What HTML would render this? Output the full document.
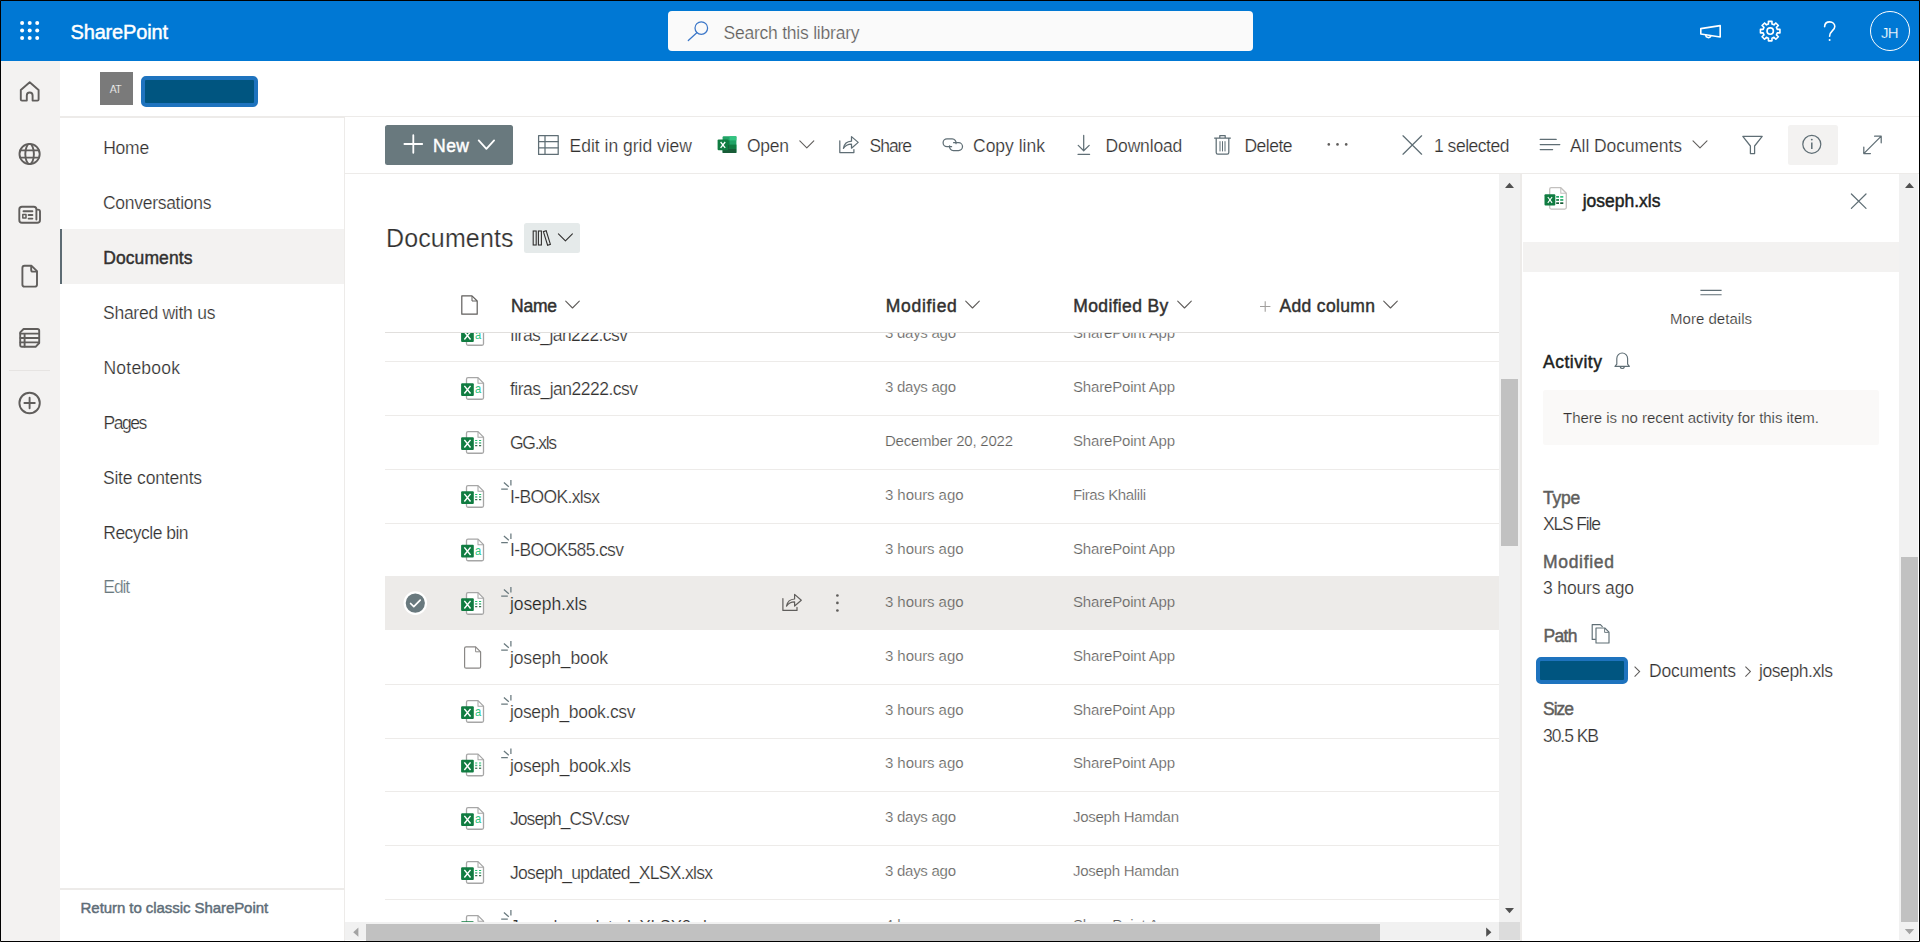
<!DOCTYPE html>
<html lang="en"><head><meta charset="utf-8"><title>Documents - All Documents</title>
<style>
html,body{margin:0;padding:0;background:#fff;}
body{width:1920px;height:942px;overflow:hidden;font-family:'Liberation Sans',sans-serif;}
#frame{position:relative;width:1920px;height:942px;overflow:hidden;background:#fff;}
#frame div,#frame span,#frame svg,#frame h1,#frame h2,#frame h3,.g{position:absolute;margin:0;padding:0;}
.g{left:0;top:0;width:0;height:0;}
.t{white-space:pre;line-height:1;font-weight:400;}
#list{left:0;top:0;width:1920px;height:942px;clip-path:inset(333px 421px 20px 345px);}
.sep{left:385px;width:1114px;height:1px;background:#edebe9;}
svg{overflow:visible;}
</style></head>
<body>
<div id="frame">
<header id="suitebar" class="g">
<div id="suitebg" style="left:0;top:0;width:1920px;height:61px;background:#0078d4;"></div>
<div id="search" style="left:668px;top:11px;width:585px;height:40px;background:#fafafa;border-radius:4px;"></div>
<div id="avatar" style="left:1870px;top:11px;width:38px;height:38px;border:1px solid #fff;border-radius:50%;"></div>
<svg style="left:0;top:0" width="1920" height="942" viewBox="0 0 1920 942" aria-hidden="true">
<circle cx="22.1" cy="22.9" r="2" fill="#fff"/>
<circle cx="29.7" cy="22.9" r="2" fill="#fff"/>
<circle cx="37.2" cy="22.9" r="2" fill="#fff"/>
<circle cx="22.1" cy="30.4" r="2" fill="#fff"/>
<circle cx="29.7" cy="30.4" r="2" fill="#fff"/>
<circle cx="37.2" cy="30.4" r="2" fill="#fff"/>
<circle cx="22.1" cy="38" r="2" fill="#fff"/>
<circle cx="29.7" cy="38" r="2" fill="#fff"/>
<circle cx="37.2" cy="38" r="2" fill="#fff"/>
<g fill="none" stroke="#3a76c8" stroke-width="1.25" stroke-linecap="round"><circle cx="701.3" cy="28.1" r="6.3"/><path d="M696.8,32.7 L688.3,40.5"/></g>
<g fill="none" stroke="#ffffff" stroke-linecap="round" stroke-linejoin="round" stroke-width="1.6"><path d="M1700.8,28.6 L1720.2,25.6 L1720.2,37 L1700.8,34 Z"/><path d="M1705.8,34.9 A2.6,2.6 0 0 0 1710.9,35.7"/></g>
<g fill="none" stroke="#ffffff" stroke-linecap="round" stroke-linejoin="round" stroke-width="1.6"><path d="M1768.42,21.36 L1771.98,21.36 L1771.96,24.02 L1773.97,24.85 L1775.83,22.96 L1778.34,25.47 L1776.45,27.33 L1777.28,29.34 L1779.94,29.32 L1779.94,32.88 L1777.28,32.86 L1776.45,34.87 L1778.34,36.73 L1775.83,39.24 L1773.97,37.35 L1771.96,38.18 L1771.98,40.84 L1768.42,40.84 L1768.44,38.18 L1766.43,37.35 L1764.57,39.24 L1762.06,36.73 L1763.95,34.87 L1763.12,32.86 L1760.46,32.88 L1760.46,29.32 L1763.12,29.34 L1763.95,27.33 L1762.06,25.47 L1764.57,22.96 L1766.43,24.85 L1768.44,24.02 Z"/><circle cx="1770.2" cy="31.1" r="3.2"/></g>
<g fill="none" stroke="#ffffff" stroke-linecap="round" stroke-linejoin="round" stroke-width="1.6"><path d="M1824.6,26.6 C1824.8,23.6 1827,21.9 1829.7,21.9 C1832.7,21.9 1834.8,23.9 1834.8,26.5 C1834.8,30.6 1829.6,30.8 1829.6,36.2"/></g><circle cx="1829.6" cy="40" r="1" fill="#fff"/>
</svg>
<span class="t" style="left:70.5px;top:22px;font-size:20px;color:#ffffff;letter-spacing:-0.163px;-webkit-text-stroke:0.45px #ffffff;">SharePoint</span>
<span class="t" style="left:723.5px;top:25px;font-size:17.5px;color:#605e5c;letter-spacing:-0.226px;-webkit-text-stroke:0.22px #fafafa;">Search this library</span>
<span class="t" style="left:1881.0px;top:25px;font-size:15px;color:#ffffff;letter-spacing:-0.844px;-webkit-text-stroke:0.22px #0078d4;">JH</span>
</header>
<nav id="apprail" class="g" aria-label="Apps">
<div id="rail" style="left:0;top:61px;width:60px;height:881px;background:#f3f2f1;"></div>
<div style="left:9px;top:370px;width:41px;height:1px;background:#e6e4e2;"></div>
<svg style="left:0;top:0" width="1920" height="942" viewBox="0 0 1920 942" aria-hidden="true">
<g fill="none" stroke="#605e5c" stroke-width="1.9" stroke-linecap="round" stroke-linejoin="round"><path d="M20.8,90 L29.7,82.3 L38.6,90 L38.6,99.4 Q38.6,100.6 37.4,100.6 L32.6,100.6 L32.6,95.4 A2.9,2.9 0 0 0 26.8,95.4 L26.8,100.6 L22,100.6 Q20.8,100.6 20.8,99.4 Z"/></g>
<g fill="none" stroke="#605e5c" stroke-width="1.9" stroke-linecap="round" stroke-linejoin="round" stroke-width="1.8"><circle cx="29.6" cy="154" r="10.1"/><ellipse cx="29.6" cy="154" rx="4.3" ry="10.1"/><path d="M20.3,150.4 L38.9,150.4 M20.3,157.6 L38.9,157.6"/></g>
<g fill="none" stroke="#605e5c" stroke-width="1.9" stroke-linecap="round" stroke-linejoin="round" stroke-width="1.8"><path d="M36.4,209.6 L38,209.6 Q40,209.6 40,211.6 L40,220 Q40,222.8 37.2,222.8 L22,222.8 Q19.3,222.8 19.3,220 L19.3,209.4 Q19.3,206.8 22,206.8 L33.8,206.8 Q36.4,206.8 36.4,209.4 L36.4,219.6"/><path d="M23.5,211.2 L32.4,211.2 M28.6,215 L32.4,215 M28.6,218.6 L32.4,218.6"/><rect x="22.8" y="214.4" width="3.2" height="3.6" stroke-width="1.5"/></g>
<g fill="none" stroke="#605e5c" stroke-width="1.9" stroke-linecap="round" stroke-linejoin="round" stroke-width="1.8"><path d="M24.6,265.8 L31.6,265.8 L37,271.2 L37,284.4 Q37,286.6 34.8,286.6 L24.6,286.6 Q22.4,286.6 22.4,284.4 L22.4,268 Q22.4,265.8 24.6,265.8 Z"/><path d="M31.2,266.2 L31.2,270 Q31.2,271.6 32.8,271.6 L36.6,271.6"/></g>
<g fill="none" stroke="#605e5c" stroke-width="1.9" stroke-linecap="round" stroke-linejoin="round" stroke-width="1.7"><path d="M23.6,329 L37.4,329 Q39.2,329 39.2,330.8 L39.2,343 L35.6,346.8 L22,346.8 Q20.2,346.8 20.2,345 L20.2,332.4 Z"/><path d="M20.4,333.6 L39,333.6 M20.4,338 L39,338 M20.4,342.4 L39,342.4 M24.6,333.8 L24.6,346.6"/></g>
<g fill="none" stroke="#605e5c" stroke-width="1.9" stroke-linecap="round" stroke-linejoin="round" stroke-width="1.7"><circle cx="29.6" cy="403" r="10.2"/><path d="M24.4,403 L34.8,403 M29.6,397.8 L29.6,408.2"/></g>
</svg>
</nav>
<div id="siteheader" class="g">
<div id="sitelogo" style="left:100px;top:72px;width:33px;height:33px;background:#7a7a7a;"></div>
<div id="redact1" style="left:141px;top:76px;width:109px;height:23px;background:#005580;border:4px solid #1e73be;border-radius:5px;"></div>
<div style="left:60px;top:116px;width:285px;height:2px;background:#edebe9;"></div>
<div style="left:345px;top:116px;width:1575px;height:1px;background:#edebe9;"></div>
<span class="t" style="left:109.8px;top:84px;font-size:10.5px;color:#ffffff;letter-spacing:-0.841px;-webkit-text-stroke:0.22px #7a7a7a;">AT</span>
</div>
<nav id="sitenav" class="g" aria-label="Site">
<div id="navsel" style="left:60px;top:229px;width:284px;height:55px;background:#f3f2f1;"></div>
<div style="left:60px;top:229px;width:2px;height:55px;background:#5c6b73;"></div>
<div style="left:344px;top:118px;width:1px;height:824px;background:#edebe9;"></div>
<div style="left:60px;top:888px;width:284px;height:2px;background:#edebe9;"></div>
<span class="t" style="left:103.2px;top:140px;font-size:17.5px;color:#323130;letter-spacing:-0.229px;-webkit-text-stroke:0.22px #ffffff;">Home</span>
<span class="t" style="left:103.0px;top:195px;font-size:17.5px;color:#323130;letter-spacing:-0.290px;-webkit-text-stroke:0.22px #ffffff;">Conversations</span>
<span class="t" style="left:103.2px;top:250px;font-size:17.5px;color:#323130;letter-spacing:0.098px;-webkit-text-stroke:0.45px #323130;">Documents</span>
<span class="t" style="left:103.0px;top:305px;font-size:17.5px;color:#323130;letter-spacing:-0.259px;-webkit-text-stroke:0.22px #ffffff;">Shared with us</span>
<span class="t" style="left:103.5px;top:360px;font-size:17.5px;color:#323130;letter-spacing:0.225px;-webkit-text-stroke:0.22px #ffffff;">Notebook</span>
<span class="t" style="left:103.6px;top:415px;font-size:17.5px;color:#323130;letter-spacing:-1.481px;-webkit-text-stroke:0.22px #ffffff;">Pages</span>
<span class="t" style="left:102.9px;top:470px;font-size:17.5px;color:#323130;letter-spacing:-0.164px;-webkit-text-stroke:0.22px #ffffff;">Site contents</span>
<span class="t" style="left:103.3px;top:525px;font-size:17.5px;color:#323130;letter-spacing:-0.527px;-webkit-text-stroke:0.22px #ffffff;">Recycle bin</span>
<span class="t" style="left:103.3px;top:579px;font-size:17.5px;color:#69797e;letter-spacing:-1.085px;-webkit-text-stroke:0.22px #ffffff;">Edit</span>
<span class="t" style="left:80.6px;top:900px;font-size:15px;color:#5e6d78;letter-spacing:-0.065px;-webkit-text-stroke:0.45px #5e6d78;">Return to classic SharePoint</span>
</nav>
<div id="commandbar" class="g" role="toolbar">
<div id="newbtn" style="left:385px;top:125px;width:128px;height:40px;background:#69797e;border-radius:2.5px;"></div>
<div id="infobtn" style="left:1788px;top:125px;width:50px;height:40px;background:#f3f2f1;border-radius:2.5px;"></div>
<div style="left:345px;top:173px;width:1575px;height:1px;background:#edebe9;"></div>
<svg style="left:0;top:0" width="1920" height="942" viewBox="0 0 1920 942" aria-hidden="true">
<path d="M404.4,144 L422.2,144 M413.3,135.2 L413.3,152.8" fill="none" stroke="#ffffff" stroke-linecap="round" stroke-linejoin="round" stroke-width="1.8" />
<path d="M478.7,140.4 L486.4,148.79999999999998 L494.09999999999997,140.4" fill="none" stroke="#fff" stroke-width="1.8" stroke-linecap="round" stroke-linejoin="round"/>
<g fill="none" stroke="#5f6e75" stroke-width="1.25" stroke-linecap="round" stroke-linejoin="round" stroke-linecap="butt" stroke-linejoin="miter"><rect x="538.6" y="135.6" width="19.6" height="18.8"/><path d="M538.6,141.6 L558.2,141.6 M538.6,147.8 L558.2,147.8 M545,135.6 L545,154.4"/></g>
<g><rect x="722.6" y="136.2" width="13.8" height="16.8" rx="1" fill="#21a366"/><rect x="729.5" y="136.2" width="6.9" height="4.2" fill="#33c481"/><rect x="722.6" y="140.4" width="6.9" height="4.2" fill="#107c41"/><rect x="729.5" y="144.6" width="6.9" height="4.2" fill="#107c41"/><rect x="722.6" y="144.6" width="6.9" height="4.2" fill="#185c37"/><rect x="722.6" y="148.8" width="13.8" height="4.2" fill="#185c37"/><rect x="717.6" y="139.6" width="10.6" height="10.6" rx="1" fill="#107c41"/><path d="M720.6,142 L725.2,147.8 M725.2,142 L720.6,147.8" stroke="#fff" stroke-width="1.3" fill="none"/></g>
<path d="M799.8,140.8 L806.8,147.8 L813.8,140.8" fill="none" stroke="#605e5c" stroke-width="1.1" stroke-linecap="round" stroke-linejoin="round"/>
<g transform="translate(839.2,135.8)" fill="none" stroke="#5f6e75" stroke-width="1.25" stroke-linejoin="round" stroke-linecap="round"><path d="M0.6,5 L0.6,16.8 L14.7,16.8 L14.7,13.8"/><path d="M4.2,12.6 C5,8 8.5,5.6 12.3,5.4 L12.3,0.8 L19,6.6 L12.3,12.4 L12.3,8.2 C9,8.2 6,9.6 4.2,12.6 Z"/></g>
<g fill="none" stroke="#5f6e75" stroke-width="1.25" stroke-linecap="round" stroke-linejoin="round"><path d="M951.6,146.7 L947,146.7 A3.9,3.9 0 0 1 947,138.9 L952.2,138.9 A3.9,3.9 0 0 1 956,143.6"/><path d="M953.6,142.7 L958.6,142.7 A3.9,3.9 0 0 1 958.6,150.5 L953.4,150.5 A3.9,3.9 0 0 1 949.6,145.8"/></g>
<g fill="none" stroke="#5f6e75" stroke-width="1.25" stroke-linecap="round" stroke-linejoin="round"><path d="M1083.7,135.4 L1083.7,150.6 M1078.2,145.4 L1083.7,150.8 L1089.2,145.4 M1078,154.3 L1089.6,154.3"/></g>
<g fill="none" stroke="#5f6e75" stroke-width="1.25" stroke-linecap="round" stroke-linejoin="round"><path d="M1214.6,138 L1230.4,138 M1219.8,138 L1219.8,135.6 L1225.2,135.6 L1225.2,138 M1216.2,138.2 L1216.2,152.6 Q1216.2,154.2 1217.8,154.2 L1227.2,154.2 Q1228.8,154.2 1228.8,152.6 L1228.8,138.2"/><path d="M1220,141.6 L1220,151 M1222.5,141.6 L1222.5,151 M1225,141.6 L1225,151" stroke-width="1"/></g>
<circle cx="1328.8" cy="144.4" r="1.3" fill="#605e5c"/>
<circle cx="1337.5" cy="144.4" r="1.3" fill="#605e5c"/>
<circle cx="1346.2" cy="144.4" r="1.3" fill="#605e5c"/>
<g fill="none" stroke="#5f6e75" stroke-width="1.25" stroke-linecap="round" stroke-linejoin="round"><path d="M1403,135.8 L1421.6,154.2 M1421.6,135.8 L1403,154.2"/></g>
<g fill="none" stroke="#5f6e75" stroke-width="1.25" stroke-linecap="round" stroke-linejoin="round"><path d="M1540.2,139.4 L1556.2,139.4 M1540.2,144.5 L1559.8,144.5 M1540.2,149.6 L1552.6,149.6"/></g>
<path d="M1693.0,140.9 L1700,147.9 L1707.0,140.9" fill="none" stroke="#605e5c" stroke-width="1.1" stroke-linecap="round" stroke-linejoin="round"/>
<g fill="none" stroke="#5f6e75" stroke-width="1.25" stroke-linecap="round" stroke-linejoin="round" stroke-linejoin="miter"><path d="M1742.8,136.4 L1762.2,136.4 L1754.6,146 L1754.6,153.6 L1750.4,153.6 L1750.4,146 Z"/></g>
<g fill="none" stroke="#5f6e75" stroke-width="1.25" stroke-linecap="round" stroke-linejoin="round"><circle cx="1811.8" cy="144.3" r="9"/><path d="M1811.8,142.4 L1811.8,149" stroke-width="1.5" stroke-linecap="butt"/></g><circle cx="1811.8" cy="139.6" r="0.95" fill="#5f6e75"/>
<g fill="none" stroke="#5f6e75" stroke-width="1.25" stroke-linecap="round" stroke-linejoin="round"><path d="M1864,153.4 L1881,136.4 M1874.6,136.2 L1881.2,136.2 L1881.2,142.8 M1863.8,147 L1863.8,153.6 L1870.4,153.6"/></g>
</svg>
<span class="t" style="left:433.0px;top:138px;font-size:17.5px;color:#ffffff;letter-spacing:0.492px;-webkit-text-stroke:0.45px #ffffff;">New</span>
<span class="t" style="left:569.5px;top:138px;font-size:17.5px;color:#323130;letter-spacing:-0.004px;-webkit-text-stroke:0.22px #ffffff;">Edit in grid view</span>
<span class="t" style="left:747.0px;top:138px;font-size:17.5px;color:#323130;letter-spacing:-0.271px;-webkit-text-stroke:0.22px #ffffff;">Open</span>
<span class="t" style="left:869.6px;top:138px;font-size:17.5px;color:#323130;letter-spacing:-1.051px;-webkit-text-stroke:0.22px #ffffff;">Share</span>
<span class="t" style="left:973.0px;top:138px;font-size:17.5px;color:#323130;letter-spacing:0.002px;-webkit-text-stroke:0.22px #ffffff;">Copy link</span>
<span class="t" style="left:1105.6px;top:138px;font-size:17.5px;color:#323130;letter-spacing:-0.161px;-webkit-text-stroke:0.22px #ffffff;">Download</span>
<span class="t" style="left:1244.4px;top:138px;font-size:17.5px;color:#323130;letter-spacing:-0.499px;-webkit-text-stroke:0.22px #ffffff;">Delete</span>
<span class="t" style="left:1434.0px;top:138px;font-size:17.5px;color:#323130;letter-spacing:-0.487px;-webkit-text-stroke:0.22px #ffffff;">1 selected</span>
<span class="t" style="left:1570.0px;top:138px;font-size:17.5px;color:#323130;letter-spacing:-0.069px;-webkit-text-stroke:0.22px #ffffff;">All Documents</span>
</div>
<main id="content" class="g">
<div id="pill" style="left:524px;top:223px;width:56px;height:30px;background:#e5eaea;border-radius:2.5px;"></div>
<div style="left:385px;top:332px;width:1114px;height:1px;background:#e1dfdd;"></div>
<svg style="left:0;top:0" width="1920" height="942" viewBox="0 0 1920 942" aria-hidden="true">
<g fill="none" stroke="#323130" stroke-width="1.1" stroke-linejoin="miter"><rect x="533.2" y="231" width="3" height="14"/><rect x="538.4" y="231" width="3" height="14"/><path d="M543.4,231.6 L546.2,230.8 L550.4,244.4 L547.6,245.2 Z"/></g>
<path d="M558.4,233.9 L565.4,240.9 L572.4,233.9" fill="none" stroke="#323130" stroke-width="1.1" stroke-linecap="round" stroke-linejoin="round"/>
<g fill="none" stroke="#605e5c" stroke-width="1.2" stroke-linejoin="round"><path d="M461.8,295.8 L472,295.8 L477.2,301 L477.2,314.2 L461.8,314.2 Z"/><path d="M472,296 L472,301 L477,301" stroke-width="1"/></g>
<path d="M565.7,301.20000000000005 L572.5,308.0 L579.3,301.20000000000005" fill="none" stroke="#605e5c" stroke-width="1.1" stroke-linecap="round" stroke-linejoin="round"/>
<path d="M965.7,301.20000000000005 L972.5,308.0 L979.3,301.20000000000005" fill="none" stroke="#605e5c" stroke-width="1.1" stroke-linecap="round" stroke-linejoin="round"/>
<path d="M1177.7,301.20000000000005 L1184.5,308.0 L1191.3,301.20000000000005" fill="none" stroke="#605e5c" stroke-width="1.1" stroke-linecap="round" stroke-linejoin="round"/>
<path d="M1383.7,301.20000000000005 L1390.5,308.0 L1397.3,301.20000000000005" fill="none" stroke="#605e5c" stroke-width="1.1" stroke-linecap="round" stroke-linejoin="round"/>
<path d="M1260,306.5 L1270.4,306.5 M1265.2,301.3 L1265.2,311.7" stroke="#a19f9d" stroke-width="1.1" fill="none"/>
</svg>
<h1 class="t" style="left:386.0px;top:226px;font-size:25px;color:#323130;letter-spacing:0.131px;-webkit-text-stroke:0.22px #ffffff;">Documents</h1>
<span class="t" style="left:511.0px;top:298px;font-size:17.5px;color:#323130;letter-spacing:-0.229px;-webkit-text-stroke:0.45px #323130;">Name</span>
<span class="t" style="left:885.8px;top:298px;font-size:17.5px;color:#323130;letter-spacing:0.692px;-webkit-text-stroke:0.45px #323130;">Modified</span>
<span class="t" style="left:1073.3px;top:298px;font-size:17.5px;color:#323130;letter-spacing:0.356px;-webkit-text-stroke:0.45px #323130;">Modified By</span>
<span class="t" style="left:1279.5px;top:298px;font-size:17.5px;color:#323130;letter-spacing:0.342px;-webkit-text-stroke:0.45px #323130;">Add column</span>
<div id="list" role="grid">
<div style="left:385px;top:576px;width:1114px;height:54px;background:#edebe9;"></div>
<div class="sep" style="top:361px"></div>
<div class="sep" style="top:415px"></div>
<div class="sep" style="top:469px"></div>
<div class="sep" style="top:523px"></div>
<div class="sep" style="top:684px"></div>
<div class="sep" style="top:738px"></div>
<div class="sep" style="top:791px"></div>
<div class="sep" style="top:845px"></div>
<div class="sep" style="top:899px"></div>
<svg style="left:0;top:0" width="1920" height="942" viewBox="0 0 1920 942">
<path d="M468.0,323.65 L478.0,323.65 L483.5,329.15 L483.5,343.75 Q483.5,345.25 482.0,345.25 L468.0,345.25 Q466.5,345.25 466.5,343.75 L466.5,325.15 Q466.5,323.65 468.0,323.65 Z" fill="#ffffff" stroke="#a6a6a6" stroke-width="1.3" stroke-linejoin="round"/><path d="M478.0,323.65 L478.0,329.15 L483.5,329.15" fill="none" stroke="#a6a6a6" stroke-width="1.04" stroke-linejoin="round"/><rect x="461.1" y="329.3" width="12.7" height="12.7" rx="1.0" fill="#107c41"/><path d="M464.3500000000001,331.85 L470.55,339.45000000000005 M470.55,331.85 L464.3500000000001,339.45000000000005" stroke="#ffffff" stroke-width="1.45" fill="none"/><text x="475.0" y="339.4" font-family="'Liberation Sans',sans-serif" font-size="13.5" textLength="6.2" lengthAdjust="spacingAndGlyphs" fill="#2fc583">a</text>
<path d="M468.0,377.65 L478.0,377.65 L483.5,383.15 L483.5,397.75 Q483.5,399.25 482.0,399.25 L468.0,399.25 Q466.5,399.25 466.5,397.75 L466.5,379.15 Q466.5,377.65 468.0,377.65 Z" fill="#ffffff" stroke="#a6a6a6" stroke-width="1.3" stroke-linejoin="round"/><path d="M478.0,377.65 L478.0,383.15 L483.5,383.15" fill="none" stroke="#a6a6a6" stroke-width="1.04" stroke-linejoin="round"/><rect x="461.1" y="383.3" width="12.7" height="12.7" rx="1.0" fill="#107c41"/><path d="M464.3500000000001,385.85 L470.55,393.45000000000005 M470.55,385.85 L464.3500000000001,393.45000000000005" stroke="#ffffff" stroke-width="1.45" fill="none"/><text x="475.0" y="393.4" font-family="'Liberation Sans',sans-serif" font-size="13.5" textLength="6.2" lengthAdjust="spacingAndGlyphs" fill="#2fc583">a</text>
<path d="M468.0,431.65 L478.0,431.65 L483.5,437.15 L483.5,451.75 Q483.5,453.25 482.0,453.25 L468.0,453.25 Q466.5,453.25 466.5,451.75 L466.5,433.15 Q466.5,431.65 468.0,431.65 Z" fill="#ffffff" stroke="#a6a6a6" stroke-width="1.3" stroke-linejoin="round"/><path d="M478.0,431.65 L478.0,437.15 L483.5,437.15" fill="none" stroke="#a6a6a6" stroke-width="1.04" stroke-linejoin="round"/><rect x="475.1" y="440.0" width="2.2" height="1.0" fill="#21c06e"/><rect x="479.0" y="440.0" width="2.2" height="1.0" fill="#21c06e"/><rect x="475.1" y="442.2" width="2.2" height="1.5" fill="#55b585"/><rect x="479.0" y="442.2" width="2.2" height="1.5" fill="#55b585"/><rect x="475.1" y="445.2" width="2.2" height="1.0" fill="#0b4a24"/><rect x="479.0" y="445.2" width="2.2" height="1.0" fill="#0b4a24"/><rect x="461.1" y="437.3" width="12.7" height="12.7" rx="1.0" fill="#107c41"/><path d="M464.3500000000001,439.85 L470.55,447.45000000000005 M470.55,439.85 L464.3500000000001,447.45000000000005" stroke="#ffffff" stroke-width="1.45" fill="none"/>
<path d="M468.0,485.65 L478.0,485.65 L483.5,491.15 L483.5,505.75 Q483.5,507.25 482.0,507.25 L468.0,507.25 Q466.5,507.25 466.5,505.75 L466.5,487.15 Q466.5,485.65 468.0,485.65 Z" fill="#ffffff" stroke="#a6a6a6" stroke-width="1.3" stroke-linejoin="round"/><path d="M478.0,485.65 L478.0,491.15 L483.5,491.15" fill="none" stroke="#a6a6a6" stroke-width="1.04" stroke-linejoin="round"/><rect x="475.1" y="494.0" width="2.2" height="1.0" fill="#21c06e"/><rect x="479.0" y="494.0" width="2.2" height="1.0" fill="#21c06e"/><rect x="475.1" y="496.2" width="2.2" height="1.5" fill="#55b585"/><rect x="479.0" y="496.2" width="2.2" height="1.5" fill="#55b585"/><rect x="475.1" y="499.2" width="2.2" height="1.0" fill="#0b4a24"/><rect x="479.0" y="499.2" width="2.2" height="1.0" fill="#0b4a24"/><rect x="461.1" y="491.3" width="12.7" height="12.7" rx="1.0" fill="#107c41"/><path d="M464.3500000000001,493.85 L470.55,501.45000000000005 M470.55,493.85 L464.3500000000001,501.45000000000005" stroke="#ffffff" stroke-width="1.45" fill="none"/>
<path d="M510.9,479.9 L510.9,485.6 M503.9,482.5 L508.8,486.8 M501.2,489.2 L507.8,489.2" stroke="#69797e" stroke-width="1.25" fill="none" stroke-linecap="butt"/>
<path d="M468.0,539.15 L478.0,539.15 L483.5,544.65 L483.5,559.25 Q483.5,560.75 482.0,560.75 L468.0,560.75 Q466.5,560.75 466.5,559.25 L466.5,540.65 Q466.5,539.15 468.0,539.15 Z" fill="#ffffff" stroke="#a6a6a6" stroke-width="1.3" stroke-linejoin="round"/><path d="M478.0,539.15 L478.0,544.65 L483.5,544.65" fill="none" stroke="#a6a6a6" stroke-width="1.04" stroke-linejoin="round"/><rect x="461.1" y="544.8" width="12.7" height="12.7" rx="1.0" fill="#107c41"/><path d="M464.3500000000001,547.35 L470.55,554.9499999999999 M470.55,547.35 L464.3500000000001,554.9499999999999" stroke="#ffffff" stroke-width="1.45" fill="none"/><text x="475.0" y="554.9" font-family="'Liberation Sans',sans-serif" font-size="13.5" textLength="6.2" lengthAdjust="spacingAndGlyphs" fill="#2fc583">a</text>
<path d="M510.9,533.4 L510.9,539.1 M503.9,536.0 L508.8,540.3 M501.2,542.7 L507.8,542.7" stroke="#69797e" stroke-width="1.25" fill="none" stroke-linecap="butt"/>
<path d="M468.0,592.65 L478.0,592.65 L483.5,598.15 L483.5,612.75 Q483.5,614.25 482.0,614.25 L468.0,614.25 Q466.5,614.25 466.5,612.75 L466.5,594.15 Q466.5,592.65 468.0,592.65 Z" fill="#ffffff" stroke="#a6a6a6" stroke-width="1.3" stroke-linejoin="round"/><path d="M478.0,592.65 L478.0,598.15 L483.5,598.15" fill="none" stroke="#a6a6a6" stroke-width="1.04" stroke-linejoin="round"/><rect x="475.1" y="601.0" width="2.2" height="1.0" fill="#21c06e"/><rect x="479.0" y="601.0" width="2.2" height="1.0" fill="#21c06e"/><rect x="475.1" y="603.2" width="2.2" height="1.5" fill="#55b585"/><rect x="479.0" y="603.2" width="2.2" height="1.5" fill="#55b585"/><rect x="475.1" y="606.2" width="2.2" height="1.0" fill="#0b4a24"/><rect x="479.0" y="606.2" width="2.2" height="1.0" fill="#0b4a24"/><rect x="461.1" y="598.3" width="12.7" height="12.7" rx="1.0" fill="#107c41"/><path d="M464.3500000000001,600.85 L470.55,608.4499999999999 M470.55,600.85 L464.3500000000001,608.4499999999999" stroke="#ffffff" stroke-width="1.45" fill="none"/>
<path d="M510.9,586.9 L510.9,592.6 M503.9,589.5 L508.8,593.8 M501.2,596.2 L507.8,596.2" stroke="#69797e" stroke-width="1.25" fill="none" stroke-linecap="butt"/>
<circle cx="415.3" cy="603.1" r="10.7" fill="#69797e" stroke="#ffffff" stroke-width="2.2"/>
<path d="M410.6,603.5 L413.8,606.7 L420.2,600.1" fill="none" stroke="#fff" stroke-width="1.7" stroke-linecap="round" stroke-linejoin="round"/>
<g transform="translate(782.3,593.6)" fill="none" stroke="#605e5c" stroke-width="1.2" stroke-linejoin="round" stroke-linecap="round"><path d="M0.6,5 L0.6,16.8 L14.7,16.8 L14.7,13.8"/><path d="M4.2,12.6 C5,8 8.5,5.6 12.3,5.4 L12.3,0.8 L19,6.6 L12.3,12.4 L12.3,8.2 C9,8.2 6,9.6 4.2,12.6 Z"/></g>
<circle cx="837.4" cy="595.5" r="1.35" fill="#605e5c"/>
<circle cx="837.4" cy="602.9" r="1.35" fill="#605e5c"/>
<circle cx="837.4" cy="610.5" r="1.35" fill="#605e5c"/>
<path d="M466.1,646.8 L475.6,646.8 L480.6,651.8 L480.6,666.6999999999999 Q480.6,668.1999999999999 479.1,668.1999999999999 L466.1,668.1999999999999 Q464.6,668.1999999999999 464.6,666.6999999999999 L464.6,648.3 Q464.6,646.8 466.1,646.8 Z" fill="#ffffff" stroke="#8a8886" stroke-width="1.2" stroke-linejoin="round"/><path d="M475.6,646.8 L475.6,651.8 L480.6,651.8" fill="none" stroke="#8a8886" stroke-width="0.96" stroke-linejoin="round"/>
<path d="M510.9,640.9 L510.9,646.6 M503.9,643.5 L508.8,647.8 M501.2,650.2 L507.8,650.2" stroke="#69797e" stroke-width="1.25" fill="none" stroke-linecap="butt"/>
<path d="M468.0,700.65 L478.0,700.65 L483.5,706.15 L483.5,720.75 Q483.5,722.25 482.0,722.25 L468.0,722.25 Q466.5,722.25 466.5,720.75 L466.5,702.15 Q466.5,700.65 468.0,700.65 Z" fill="#ffffff" stroke="#a6a6a6" stroke-width="1.3" stroke-linejoin="round"/><path d="M478.0,700.65 L478.0,706.15 L483.5,706.15" fill="none" stroke="#a6a6a6" stroke-width="1.04" stroke-linejoin="round"/><rect x="461.1" y="706.3" width="12.7" height="12.7" rx="1.0" fill="#107c41"/><path d="M464.3500000000001,708.85 L470.55,716.4499999999999 M470.55,708.85 L464.3500000000001,716.4499999999999" stroke="#ffffff" stroke-width="1.45" fill="none"/><text x="475.0" y="716.4" font-family="'Liberation Sans',sans-serif" font-size="13.5" textLength="6.2" lengthAdjust="spacingAndGlyphs" fill="#2fc583">a</text>
<path d="M510.9,694.9 L510.9,700.6 M503.9,697.5 L508.8,701.8 M501.2,704.2 L507.8,704.2" stroke="#69797e" stroke-width="1.25" fill="none" stroke-linecap="butt"/>
<path d="M468.0,754.15 L478.0,754.15 L483.5,759.65 L483.5,774.25 Q483.5,775.75 482.0,775.75 L468.0,775.75 Q466.5,775.75 466.5,774.25 L466.5,755.65 Q466.5,754.15 468.0,754.15 Z" fill="#ffffff" stroke="#a6a6a6" stroke-width="1.3" stroke-linejoin="round"/><path d="M478.0,754.15 L478.0,759.65 L483.5,759.65" fill="none" stroke="#a6a6a6" stroke-width="1.04" stroke-linejoin="round"/><rect x="475.1" y="762.5" width="2.2" height="1.0" fill="#21c06e"/><rect x="479.0" y="762.5" width="2.2" height="1.0" fill="#21c06e"/><rect x="475.1" y="764.7" width="2.2" height="1.5" fill="#55b585"/><rect x="479.0" y="764.7" width="2.2" height="1.5" fill="#55b585"/><rect x="475.1" y="767.7" width="2.2" height="1.0" fill="#0b4a24"/><rect x="479.0" y="767.7" width="2.2" height="1.0" fill="#0b4a24"/><rect x="461.1" y="759.8" width="12.7" height="12.7" rx="1.0" fill="#107c41"/><path d="M464.3500000000001,762.35 L470.55,769.9499999999999 M470.55,762.35 L464.3500000000001,769.9499999999999" stroke="#ffffff" stroke-width="1.45" fill="none"/>
<path d="M510.9,748.4 L510.9,754.1 M503.9,751.0 L508.8,755.3 M501.2,757.7 L507.8,757.7" stroke="#69797e" stroke-width="1.25" fill="none" stroke-linecap="butt"/>
<path d="M468.0,807.65 L478.0,807.65 L483.5,813.15 L483.5,827.75 Q483.5,829.25 482.0,829.25 L468.0,829.25 Q466.5,829.25 466.5,827.75 L466.5,809.15 Q466.5,807.65 468.0,807.65 Z" fill="#ffffff" stroke="#a6a6a6" stroke-width="1.3" stroke-linejoin="round"/><path d="M478.0,807.65 L478.0,813.15 L483.5,813.15" fill="none" stroke="#a6a6a6" stroke-width="1.04" stroke-linejoin="round"/><rect x="461.1" y="813.3" width="12.7" height="12.7" rx="1.0" fill="#107c41"/><path d="M464.3500000000001,815.85 L470.55,823.4499999999999 M470.55,815.85 L464.3500000000001,823.4499999999999" stroke="#ffffff" stroke-width="1.45" fill="none"/><text x="475.0" y="823.4" font-family="'Liberation Sans',sans-serif" font-size="13.5" textLength="6.2" lengthAdjust="spacingAndGlyphs" fill="#2fc583">a</text>
<path d="M468.0,861.65 L478.0,861.65 L483.5,867.15 L483.5,881.75 Q483.5,883.25 482.0,883.25 L468.0,883.25 Q466.5,883.25 466.5,881.75 L466.5,863.15 Q466.5,861.65 468.0,861.65 Z" fill="#ffffff" stroke="#a6a6a6" stroke-width="1.3" stroke-linejoin="round"/><path d="M478.0,861.65 L478.0,867.15 L483.5,867.15" fill="none" stroke="#a6a6a6" stroke-width="1.04" stroke-linejoin="round"/><rect x="475.1" y="870.0" width="2.2" height="1.0" fill="#21c06e"/><rect x="479.0" y="870.0" width="2.2" height="1.0" fill="#21c06e"/><rect x="475.1" y="872.2" width="2.2" height="1.5" fill="#55b585"/><rect x="479.0" y="872.2" width="2.2" height="1.5" fill="#55b585"/><rect x="475.1" y="875.2" width="2.2" height="1.0" fill="#0b4a24"/><rect x="479.0" y="875.2" width="2.2" height="1.0" fill="#0b4a24"/><rect x="461.1" y="867.3" width="12.7" height="12.7" rx="1.0" fill="#107c41"/><path d="M464.3500000000001,869.85 L470.55,877.4499999999999 M470.55,869.85 L464.3500000000001,877.4499999999999" stroke="#ffffff" stroke-width="1.45" fill="none"/>
<path d="M468.0,915.65 L478.0,915.65 L483.5,921.15 L483.5,935.75 Q483.5,937.25 482.0,937.25 L468.0,937.25 Q466.5,937.25 466.5,935.75 L466.5,917.15 Q466.5,915.65 468.0,915.65 Z" fill="#ffffff" stroke="#a6a6a6" stroke-width="1.3" stroke-linejoin="round"/><path d="M478.0,915.65 L478.0,921.15 L483.5,921.15" fill="none" stroke="#a6a6a6" stroke-width="1.04" stroke-linejoin="round"/><rect x="475.1" y="924.0" width="2.2" height="1.0" fill="#21c06e"/><rect x="479.0" y="924.0" width="2.2" height="1.0" fill="#21c06e"/><rect x="475.1" y="926.2" width="2.2" height="1.5" fill="#55b585"/><rect x="479.0" y="926.2" width="2.2" height="1.5" fill="#55b585"/><rect x="475.1" y="929.2" width="2.2" height="1.0" fill="#0b4a24"/><rect x="479.0" y="929.2" width="2.2" height="1.0" fill="#0b4a24"/><rect x="461.1" y="921.3" width="12.7" height="12.7" rx="1.0" fill="#107c41"/><path d="M464.3500000000001,923.85 L470.55,931.4499999999999 M470.55,923.85 L464.3500000000001,931.4499999999999" stroke="#ffffff" stroke-width="1.45" fill="none"/>
<path d="M510.9,909.9 L510.9,915.6 M503.9,912.5 L508.8,916.8 M501.2,919.2 L507.8,919.2" stroke="#69797e" stroke-width="1.25" fill="none" stroke-linecap="butt"/>
</svg>
<span class="t" style="left:510.0px;top:327px;font-size:17.5px;color:#323130;letter-spacing:-0.565px;-webkit-text-stroke:0.22px #ffffff;">firas_jan222.csv</span>
<span class="t" style="left:885.0px;top:325px;font-size:15px;color:#605e5c;letter-spacing:-0.266px;-webkit-text-stroke:0.22px #ffffff;">3 days ago</span>
<span class="t" style="left:1073.0px;top:325px;font-size:15px;color:#605e5c;letter-spacing:-0.173px;-webkit-text-stroke:0.22px #ffffff;">SharePoint App</span>
<span class="t" style="left:510.0px;top:381px;font-size:17.5px;color:#323130;letter-spacing:-0.513px;-webkit-text-stroke:0.22px #ffffff;">firas_jan2222.csv</span>
<span class="t" style="left:885.0px;top:379px;font-size:15px;color:#605e5c;letter-spacing:-0.266px;-webkit-text-stroke:0.22px #ffffff;">3 days ago</span>
<span class="t" style="left:1073.0px;top:379px;font-size:15px;color:#605e5c;letter-spacing:-0.173px;-webkit-text-stroke:0.22px #ffffff;">SharePoint App</span>
<span class="t" style="left:510.0px;top:435px;font-size:17.5px;color:#323130;letter-spacing:-1.297px;-webkit-text-stroke:0.22px #ffffff;">GG.xls</span>
<span class="t" style="left:885.0px;top:433px;font-size:15px;color:#605e5c;letter-spacing:-0.234px;-webkit-text-stroke:0.22px #ffffff;">December 20, 2022</span>
<span class="t" style="left:1073.0px;top:433px;font-size:15px;color:#605e5c;letter-spacing:-0.173px;-webkit-text-stroke:0.22px #ffffff;">SharePoint App</span>
<span class="t" style="left:510.0px;top:489px;font-size:17.5px;color:#323130;letter-spacing:-0.627px;-webkit-text-stroke:0.22px #ffffff;">I-BOOK.xlsx</span>
<span class="t" style="left:885.0px;top:487px;font-size:15px;color:#605e5c;letter-spacing:-0.073px;-webkit-text-stroke:0.22px #ffffff;">3 hours ago</span>
<span class="t" style="left:1073.0px;top:487px;font-size:15px;color:#605e5c;letter-spacing:-0.378px;-webkit-text-stroke:0.22px #ffffff;">Firas Khalili</span>
<span class="t" style="left:510.0px;top:542px;font-size:17.5px;color:#323130;letter-spacing:-0.632px;-webkit-text-stroke:0.22px #ffffff;">I-BOOK585.csv</span>
<span class="t" style="left:885.0px;top:541px;font-size:15px;color:#605e5c;letter-spacing:-0.073px;-webkit-text-stroke:0.22px #ffffff;">3 hours ago</span>
<span class="t" style="left:1073.0px;top:541px;font-size:15px;color:#605e5c;letter-spacing:-0.173px;-webkit-text-stroke:0.22px #ffffff;">SharePoint App</span>
<span class="t" style="left:510.0px;top:596px;font-size:17.5px;color:#201f1e;letter-spacing:-0.092px;-webkit-text-stroke:0.22px #edebe9;">joseph.xls</span>
<span class="t" style="left:885.0px;top:594px;font-size:15px;color:#605e5c;letter-spacing:-0.073px;-webkit-text-stroke:0.22px #edebe9;">3 hours ago</span>
<span class="t" style="left:1073.0px;top:594px;font-size:15px;color:#605e5c;letter-spacing:-0.173px;-webkit-text-stroke:0.22px #edebe9;">SharePoint App</span>
<span class="t" style="left:510.0px;top:650px;font-size:17.5px;color:#323130;letter-spacing:-0.125px;-webkit-text-stroke:0.22px #ffffff;">joseph_book</span>
<span class="t" style="left:885.0px;top:648px;font-size:15px;color:#605e5c;letter-spacing:-0.073px;-webkit-text-stroke:0.22px #ffffff;">3 hours ago</span>
<span class="t" style="left:1073.0px;top:648px;font-size:15px;color:#605e5c;letter-spacing:-0.173px;-webkit-text-stroke:0.22px #ffffff;">SharePoint App</span>
<span class="t" style="left:510.0px;top:704px;font-size:17.5px;color:#323130;letter-spacing:-0.348px;-webkit-text-stroke:0.22px #ffffff;">joseph_book.csv</span>
<span class="t" style="left:885.0px;top:702px;font-size:15px;color:#605e5c;letter-spacing:-0.073px;-webkit-text-stroke:0.22px #ffffff;">3 hours ago</span>
<span class="t" style="left:1073.0px;top:702px;font-size:15px;color:#605e5c;letter-spacing:-0.173px;-webkit-text-stroke:0.22px #ffffff;">SharePoint App</span>
<span class="t" style="left:510.0px;top:758px;font-size:17.5px;color:#323130;letter-spacing:-0.321px;-webkit-text-stroke:0.22px #ffffff;">joseph_book.xls</span>
<span class="t" style="left:885.0px;top:755px;font-size:15px;color:#605e5c;letter-spacing:-0.073px;-webkit-text-stroke:0.22px #ffffff;">3 hours ago</span>
<span class="t" style="left:1073.0px;top:755px;font-size:15px;color:#605e5c;letter-spacing:-0.173px;-webkit-text-stroke:0.22px #ffffff;">SharePoint App</span>
<span class="t" style="left:510.0px;top:811px;font-size:17.5px;color:#323130;letter-spacing:-0.935px;-webkit-text-stroke:0.22px #ffffff;">Joseph_CSV.csv</span>
<span class="t" style="left:885.0px;top:809px;font-size:15px;color:#605e5c;letter-spacing:-0.266px;-webkit-text-stroke:0.22px #ffffff;">3 days ago</span>
<span class="t" style="left:1073.0px;top:809px;font-size:15px;color:#605e5c;letter-spacing:-0.270px;-webkit-text-stroke:0.22px #ffffff;">Joseph Hamdan</span>
<span class="t" style="left:510.0px;top:865px;font-size:17.5px;color:#323130;letter-spacing:-0.692px;-webkit-text-stroke:0.22px #ffffff;">Joseph_updated_XLSX.xlsx</span>
<span class="t" style="left:885.0px;top:863px;font-size:15px;color:#605e5c;letter-spacing:-0.266px;-webkit-text-stroke:0.22px #ffffff;">3 days ago</span>
<span class="t" style="left:1073.0px;top:863px;font-size:15px;color:#605e5c;letter-spacing:-0.270px;-webkit-text-stroke:0.22px #ffffff;">Joseph Hamdan</span>
<span class="t" style="left:510.0px;top:919px;font-size:17.5px;color:#323130;letter-spacing:-0.652px;-webkit-text-stroke:0.22px #ffffff;">Joseph_updated_XLSX2.xlsx</span>
<span class="t" style="left:885.0px;top:917px;font-size:15px;color:#605e5c;letter-spacing:-0.073px;-webkit-text-stroke:0.22px #ffffff;">4 hours ago</span>
<span class="t" style="left:1073.0px;top:917px;font-size:15px;color:#605e5c;letter-spacing:-0.173px;-webkit-text-stroke:0.22px #ffffff;">SharePoint App</span>
</div>
</main>
<aside id="details" class="g" aria-label="Details">
<div style="left:1520px;top:174px;width:2px;height:768px;background:#edebe9;"></div>
<div id="pane" style="left:1522px;top:174px;width:377px;height:768px;background:#fff;"></div>
<div style="left:1523px;top:242px;width:376px;height:30px;background:#f3f2f1;"></div>
<div id="actbox" style="left:1543px;top:390px;width:336px;height:55px;background:#faf9f8;border-radius:2.5px;"></div>
<div id="redact2" style="left:1536px;top:657px;width:84px;height:19px;background:#005580;border:4px solid #1e73be;border-radius:5px;"></div>
<svg style="left:0;top:0" width="1920" height="942" viewBox="0 0 1920 942" aria-hidden="true">
<path d="M1551.2,187.7 L1560.8,187.7 L1566.3,193.2 L1566.3,207.6 Q1566.3,209.1 1564.8,209.1 L1551.2,209.1 Q1549.7,209.1 1549.7,207.6 L1549.7,189.2 Q1549.7,187.7 1551.2,187.7 Z" fill="#ffffff" stroke="#c2c0be" stroke-width="1.3" stroke-linejoin="round"/><path d="M1560.8,187.7 L1560.8,193.2 L1566.3,193.2" fill="none" stroke="#c2c0be" stroke-width="1.04" stroke-linejoin="round"/><rect x="1556.2" y="196.0" width="2.8" height="1.7" fill="#21a366"/><rect x="1560.2" y="196.0" width="3.1" height="1.7" fill="#33c481"/><rect x="1556.2" y="199.1" width="2.8" height="1.7" fill="#107c41"/><rect x="1560.2" y="199.1" width="3.1" height="1.7" fill="#21a366"/><rect x="1556.2" y="202.3" width="2.8" height="1.7" fill="#185c37"/><rect x="1560.2" y="202.3" width="3.1" height="1.7" fill="#185c37"/><rect x="1544.5" y="194.3" width="10.8" height="11.3" rx="1" fill="#107c41"/><path d="M1547.8,197 L1552.1,202.9 M1552.1,197 L1547.8,202.9" stroke="#fff" stroke-width="1.1" fill="none"/>
<g fill="none" stroke="#5f6e75" stroke-width="1.25" stroke-linecap="round"><path d="M1851.4,194 L1866,208.4 M1866,194 L1851.4,208.4"/></g>
<path d="M1700.4,290.4 L1721.6,290.4 M1700.4,294.8 L1721.6,294.8" stroke="#5f6e75" stroke-width="1.1" fill="none"/>
<g fill="none" stroke="#5f6e75" stroke-width="1.15" stroke-linejoin="round"><path d="M1615,366.4 L1616.8,364.2 L1616.8,358.4 A5.4,5.4 0 0 1 1627.6,358.4 L1627.6,364.2 L1629.4,366.4 Z"/><path d="M1620.2,367 A2.2,2.2 0 0 0 1624.4,367"/></g>
<g fill="none" stroke="#5f6e75" stroke-width="1.15" stroke-linejoin="round"><path d="M1595.8,639.4 L1592.2,639.4 L1592.2,624.6 L1600.4,624.6 L1602.6,626.8"/><path d="M1596,628 L1604.8,628 L1609,632.2 L1609,643 L1596,643 Z"/><path d="M1604.6,628.2 L1604.6,632.4 L1608.8,632.4" stroke-width="0.9"/></g>
<path d="M1634.6,666.6 L1639.6,671.6 L1634.6,676.6 M1745.4,666.6 L1750.4,671.6 L1745.4,676.6" fill="none" stroke="#605e5c" stroke-width="1.1"/>
</svg>
<h2 class="t" style="left:1582.7px;top:193px;font-size:17.5px;color:#201f1e;letter-spacing:-0.014px;-webkit-text-stroke:0.45px #201f1e;">joseph.xls</h2>
<span class="t" style="left:1670.0px;top:311px;font-size:15px;color:#323130;letter-spacing:0.027px;-webkit-text-stroke:0.22px #ffffff;">More details</span>
<h3 class="t" style="left:1543.0px;top:354px;font-size:17.5px;color:#201f1e;letter-spacing:0.509px;-webkit-text-stroke:0.45px #201f1e;">Activity</h3>
<span class="t" style="left:1563.0px;top:410px;font-size:15px;color:#323130;letter-spacing:-0.019px;-webkit-text-stroke:0.22px #faf9f8;">There is no recent activity for this item.</span>
<span class="t" style="left:1543.0px;top:490px;font-size:17.5px;color:#605e5c;letter-spacing:-0.251px;-webkit-text-stroke:0.45px #605e5c;">Type</span>
<span class="t" style="left:1543.0px;top:516px;font-size:17.5px;color:#323130;letter-spacing:-1.163px;-webkit-text-stroke:0.22px #ffffff;">XLS File</span>
<span class="t" style="left:1543.0px;top:554px;font-size:17.5px;color:#605e5c;letter-spacing:0.692px;-webkit-text-stroke:0.45px #605e5c;">Modified</span>
<span class="t" style="left:1543.0px;top:580px;font-size:17.5px;color:#323130;letter-spacing:-0.144px;-webkit-text-stroke:0.22px #ffffff;">3 hours ago</span>
<span class="t" style="left:1543.4px;top:628px;font-size:17.5px;color:#605e5c;letter-spacing:-0.600px;-webkit-text-stroke:0.45px #605e5c;">Path</span>
<span class="t" style="left:1649.0px;top:663px;font-size:17.5px;color:#323130;letter-spacing:-0.189px;-webkit-text-stroke:0.22px #ffffff;">Documents</span>
<span class="t" style="left:1759.0px;top:663px;font-size:17.5px;color:#323130;letter-spacing:-0.425px;-webkit-text-stroke:0.22px #ffffff;">joseph.xls</span>
<span class="t" style="left:1543.0px;top:701px;font-size:17.5px;color:#605e5c;letter-spacing:-1.016px;-webkit-text-stroke:0.45px #605e5c;">Size</span>
<span class="t" style="left:1543.0px;top:728px;font-size:17.5px;color:#323130;letter-spacing:-1.047px;-webkit-text-stroke:0.22px #ffffff;">30.5 KB</span>
</aside>
<div id="scrollbars" class="g">
<div style="left:1499px;top:174px;width:21px;height:748px;background:#f1f1f1;"></div>
<div style="left:1501px;top:379px;width:17px;height:167px;background:#c1c1c1;"></div>
<div style="left:1499px;top:922px;width:21px;height:18px;background:#dcdcdc;"></div>
<div style="left:345px;top:922px;width:1154px;height:18px;background:#f1f1f1;"></div>
<div style="left:366px;top:924px;width:1014px;height:17px;background:#c1c1c1;"></div>
<div style="left:1899px;top:174px;width:19px;height:766px;background:#f1f1f1;"></div>
<div style="left:1901px;top:557px;width:17px;height:365px;background:#c1c1c1;"></div>
<svg style="left:0;top:0" width="1920" height="942" viewBox="0 0 1920 942" aria-hidden="true">
<path d="M1505,188 L1509.5,182.8 L1514,188 Z" fill="#505050"/>
<path d="M1505,908 L1509.5,913.2 L1514,908 Z" fill="#505050"/>
<path d="M358.4,927.6 L353.2,932.2 L358.4,936.8 Z" fill="#a3a3a3"/>
<path d="M1486.2,927.6 L1491.4,932.2 L1486.2,936.8 Z" fill="#505050"/>
<path d="M1905,188 L1909.5,182.8 L1914,188 Z" fill="#505050"/>
<path d="M1904.8,929 L1909.5,934.2 L1914.2,929 Z" fill="#a3a3a3"/>
</svg>
</div>
<svg style="left:0;top:0" width="1920" height="942" viewBox="0 0 1920 942" aria-hidden="true">
<path d="M0.5,0.5 L1919.5,0.5 L1919.5,941.5 L0.5,941.5 Z" fill="none" stroke="#000" stroke-width="1"/>
</svg>
</div>
</body></html>
